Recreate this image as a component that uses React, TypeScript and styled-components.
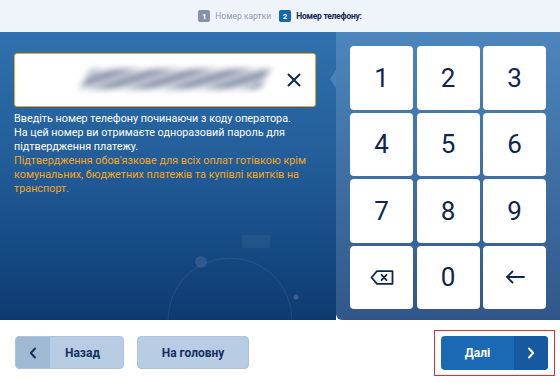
import styled, { createGlobalStyle } from 'styled-components';

const GlobalStyle = createGlobalStyle`
  html, body {
    margin: 0;
    padding: 0;
    width: 560px;
    height: 383px;
    overflow: hidden;
    font-family: Roboto, "Liberation Sans", Arial, sans-serif;
  }
`;

const keys = ['1', '2', '3', '4', '5', '6', '7', '8', '9', 'del', '0', 'back'];

const App = () => {
  return (
    <Page>
      <GlobalStyle />
      <Header>
        <Step>
          <Badge $active={false}>1</Badge>
          <StepLabel $active={false}>Номер картки</StepLabel>
        </Step>
        <Step>
          <Badge $active>2</Badge>
          <StepLabel $active>Номер телефону:</StepLabel>
        </Step>
      </Header>

      <Main>
        <LeftPanel>
          <Decor width="336" height="288" viewBox="0 0 336 288">
            <path d="M168 288 A62 62 0 0 1 292 288" fill="none" stroke="rgba(255,255,255,0.08)" strokeWidth="1" />
            <circle cx="201" cy="230" r="6" fill="rgba(255,255,255,0.1)" />
            <circle cx="296" cy="265" r="2.5" fill="rgba(255,255,255,0.18)" />
            <rect x="242" y="203" width="28" height="13" fill="rgba(255,255,255,0.05)" />
          </Decor>
          <PhoneField>
            <Blurred />
            <ClearButton>
              <svg width="14" height="14" viewBox="0 0 14 14">
                <path d="M1.5 1.5 L12.5 12.5 M12.5 1.5 L1.5 12.5" stroke="#0f2550" strokeWidth="2" strokeLinecap="round" />
              </svg>
            </ClearButton>
          </PhoneField>
          <Hint>
            Введіть номер телефону починаючи з коду оператора.<br />
            На цей номер ви отримаєте одноразовий пароль для підтвердження платежу.
          </Hint>
          <Warning>
            Підтвердження обов'язкове для всіх оплат готівкою крім комунальних, бюджетних платежів та купівлі квитків на транспорт.
          </Warning>
        </LeftPanel>

        <RightPanel>
          <Notch />
          <Keypad>
            {keys.map(k => (
              <Key key={k}>
                {k === 'del' ? (
                  <svg width="24" height="15" viewBox="0 0 24 15">
                    <path d="M7 1.2 H22.5 V13.8 H7 L1.5 7.5 Z" fill="none" stroke="#0f2550" strokeWidth="1.8" strokeLinejoin="round" />
                    <path d="M11.5 4.8 L16.5 10.2 M16.5 4.8 L11.5 10.2" stroke="#0f2550" strokeWidth="1.8" strokeLinecap="round" />
                  </svg>
                ) : k === 'back' ? (
                  <svg width="20" height="14" viewBox="0 0 20 14">
                    <path d="M19 7 H2 M7.5 1.5 L2 7 L7.5 12.5" fill="none" stroke="#0f2550" strokeWidth="1.8" strokeLinecap="round" strokeLinejoin="round" />
                  </svg>
                ) : k}
              </Key>
            ))}
          </Keypad>
        </RightPanel>
      </Main>

      <Footer>
        <LeftButtons>
          <LightButton $width={109}>
            <ButtonCap $side="left">
              <svg width="8" height="12" viewBox="0 0 8 12">
                <path d="M6 1.5 L1.8 6 L6 10.5" fill="none" stroke="#13315f" strokeWidth="2" strokeLinecap="round" strokeLinejoin="round" />
              </svg>
            </ButtonCap>
            <ButtonText $shift={-4}>Назад</ButtonText>
          </LightButton>
          <LightButton $width={112}>
            <ButtonText $shift={0}>На головну</ButtonText>
          </LightButton>
        </LeftButtons>
        <Highlight>
          <PrimaryButton>
            <ButtonText $shift={0}>Далі</ButtonText>
            <ButtonCap $side="right">
              <svg width="8" height="12" viewBox="0 0 8 12">
                <path d="M2 1.5 L6.2 6 L2 10.5" fill="none" stroke="#ffffff" strokeWidth="2" strokeLinecap="round" strokeLinejoin="round" />
              </svg>
            </ButtonCap>
          </PrimaryButton>
        </Highlight>
      </Footer>
    </Page>
  );
};

const Page = styled.div`
  width: 560px;
  height: 383px;
  display: flex;
  flex-direction: column;
  background: #ffffff;
`;

const Header = styled.header`
  height: 32px;
  flex: none;
  background: #eff4fa;
  display: flex;
  align-items: center;
  justify-content: center;
  gap: 8px;
  box-sizing: border-box;
`;

const Step = styled.div`
  display: flex;
  align-items: center;
  gap: 5px;
`;

const Badge = styled.span<{ $active: boolean }>`
  width: 12px;
  height: 12px;
  border-radius: 2px;
  background: ${p => (p.$active ? '#1565b0' : '#8593a8')};
  color: #ffffff;
  font-size: 8px;
  font-weight: 700;
  display: flex;
  align-items: center;
  justify-content: center;
`;

const StepLabel = styled.span<{ $active: boolean }>`
  font-size: 8.5px;
  font-weight: ${p => (p.$active ? 700 : 400)};
  letter-spacing: ${p => (p.$active ? '-0.25px' : '0')};
  color: ${p => (p.$active ? '#13294f' : '#8d9bb0')};
`;

const Main = styled.main`
  height: 288px;
  flex: none;
  display: flex;
`;

const LeftPanel = styled.section`
  position: relative;
  flex: 1;
  padding: 21px 20px 0 14px;
  background: linear-gradient(180deg, #2f71ae 0%, #225d98 45%, #0d3a71 100%);
  overflow: hidden;
`;

const Decor = styled.svg`
  position: absolute;
  left: 0;
  top: 0;
  pointer-events: none;
`;

const PhoneField = styled.div`
  position: relative;
  height: 54px;
  background: #ffffff;
  border: 1.5px solid #f2a41f;
  border-radius: 3px;
  box-sizing: border-box;
  display: flex;
  align-items: center;
  justify-content: flex-end;
  padding-right: 14px;
`;

const Blurred = styled.div`
  position: absolute;
  left: 70px;
  top: 15px;
  width: 180px;
  height: 20px;
  background: repeating-linear-gradient(
    -20deg,
    rgba(60, 75, 110, 0.6) 0px,
    rgba(60, 75, 110, 0.6) 5px,
    rgba(160, 170, 195, 0.3) 9px,
    rgba(60, 75, 110, 0.55) 13px
  );
  filter: blur(3.5px);
  transform: skewX(-25deg);
`;

const ClearButton = styled.span`
  position: relative;
  display: flex;
  width: 14px;
  height: 14px;
`;

const Hint = styled.p`
  position: relative;
  margin: 5px 0 0;
  font-size: 10.8px;
  line-height: 14px;
  color: #ffffff;
`;

const Warning = styled.p`
  position: relative;
  margin: 0;
  font-size: 10.8px;
  line-height: 14px;
  color: #f5a623;
`;

const RightPanel = styled.section`
  position: relative;
  width: 224px;
  flex: none;
  box-sizing: border-box;
  padding: 14px 14px 11px;
  background: linear-gradient(180deg, #4c86bd 0%, #3f6fa3 50%, #31578a 100%);
  border-bottom-left-radius: 6px;
`;

const Notch = styled.span`
  position: absolute;
  left: -6px;
  top: 38px;
  width: 0;
  height: 0;
  border-top: 9px solid transparent;
  border-bottom: 9px solid transparent;
  border-right: 6px solid #4a84ba;
`;

const Keypad = styled.div`
  height: 100%;
  display: grid;
  grid-template-columns: repeat(3, 1fr);
  grid-template-rows: repeat(4, 1fr);
  gap: 3px 3.5px;
`;

const Key = styled.button`
  border: none;
  border-radius: 4px;
  background: #ffffff;
  color: #0f2550;
  font-family: Roboto, "Liberation Sans", Arial, sans-serif;
  font-size: 26px;
  font-weight: 400;
  display: flex;
  align-items: center;
  justify-content: center;
  padding: 0;
`;

const Footer = styled.footer`
  flex: 1;
  display: flex;
  justify-content: space-between;
  align-items: flex-start;
  padding: 10px 5px 0 15px;
`;

const LeftButtons = styled.div`
  display: flex;
  gap: 13px;
  padding-top: 6px;
`;

const LightButton = styled.button<{ $width: number }>`
  width: ${p => p.$width}px;
  height: 33px;
  padding: 0;
  border: 1px solid #aec4dd;
  border-radius: 4px;
  background: #b8cde4;
  color: #13315f;
  display: flex;
  align-items: stretch;
  overflow: hidden;
`;

const ButtonCap = styled.span<{ $side: 'left' | 'right' }>`
  width: 34px;
  flex: none;
  display: flex;
  align-items: center;
  justify-content: center;
  background: ${p => (p.$side === 'left' ? '#9fb8d3' : '#1659a0')};
`;

const ButtonText = styled.span<{ $shift: number }>`
  flex: 1;
  display: flex;
  align-items: center;
  justify-content: center;
  padding-right: ${p => -p.$shift * 2}px;
  font-family: Roboto, "Liberation Sans", Arial, sans-serif;
  font-size: 12px;
  font-weight: 700;
`;

const Highlight = styled.div`
  border: 1px solid #ec2a2a;
  padding: 5px 6px;
`;

const PrimaryButton = styled.button`
  width: 107px;
  height: 34px;
  padding: 0;
  border: none;
  border-radius: 4px;
  background: #1b68b4;
  color: #ffffff;
  display: flex;
  align-items: stretch;
  overflow: hidden;
`;

export default App;
